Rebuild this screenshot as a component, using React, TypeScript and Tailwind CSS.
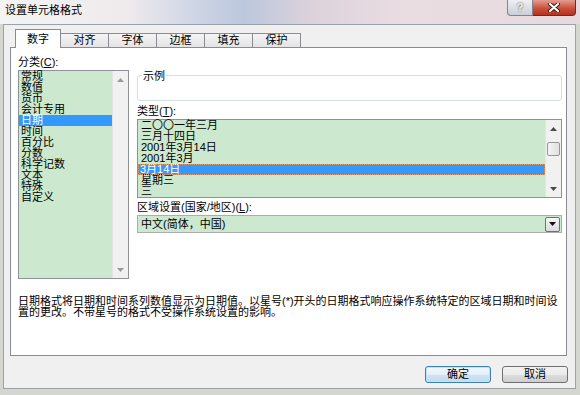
const categories = ["常规", "数值", "货币", "会计专用", "日期", "时间", "百分比", "分数", "科学记数", "文本", "特殊", "自定义"];
const types = ["二〇〇一年三月", "三月十四日", "2001年3月14日", "2001年3月", "3月14日", "星期三", "三"];
const tabs = ["对齐", "字体", "边框", "填充", "保护"];

function Arrow({ up, dark }: { up?: boolean; dark?: boolean }) {
  return (
    <svg width="7" height="4" viewBox="0 0 7 4">
      <path d={up ? "M0 4 L3.5 0 L7 4 Z" : "M0 0 L3.5 4 L7 0 Z"} fill={dark ? "#4a4a4a" : "#9a9a9a"} />
    </svg>
  );
}

function ScrollBar({ thumb, dark }: { thumb?: boolean; dark?: boolean }) {
  return (
    <div className="w-[16px] shrink-0 flex flex-col bg-[#f1f1f1] border-l border-[#e4e4e4]">
      <div className="h-[17px] flex items-center justify-center">
        <Arrow up dark={dark} />
      </div>
      <div className="flex-1">
        {thumb && (
          <div className="mt-[5px] mx-[1px] h-[14px] rounded-[2px] border border-[#979797] bg-[linear-gradient(90deg,#f3f3f3,#e2e2e2)]" />
        )}
      </div>
      <div className="h-[17px] flex items-center justify-center">
        <Arrow dark={dark} />
      </div>
    </div>
  );
}

export default function App() {
  return (
    <div className="w-[580px] h-[395px] overflow-hidden flex flex-col bg-[#d4d7d0] text-black font-['Liberation_Sans','Noto_Sans_CJK_SC',sans-serif]">
      {/* 标题栏 */}
      <div className="h-[24px] shrink-0 flex items-start bg-[linear-gradient(90deg,#f4f4f4_0%,#efeaec_22%,#d2d8e6_32%,#bcc7dd_42%,#dcd3db_54%,#eadde2_70%,#e6dadf_100%)]">
        <span className="ml-[5px] mt-[3px] text-[11px] leading-[15px]">设置单元格格式</span>
        <div className="ml-auto mr-[4px] flex">
          <div className="w-[26px] h-[16px] flex items-center justify-center rounded-bl-[4px] border border-t-0 border-[#7d8592] bg-[linear-gradient(180deg,#eef0f3,#c9ced8)] text-[11px] font-bold text-[#f6f6f6] [text-shadow:0_0_2px_#333]">
            ?
          </div>
          <div className="w-[43px] h-[16px] flex items-center justify-center rounded-br-[4px] border border-l-0 border-t-0 border-[#6e2a22] bg-[linear-gradient(180deg,#e59c8f,#c9513d_55%,#b7311e)]">
            <svg width="12" height="9" viewBox="0 0 12 9">
              <path d="M2 1 L10 8 M10 1 L2 8" stroke="#3a1a16" strokeWidth="4" strokeLinecap="round" />
              <path d="M2 1 L10 8 M10 1 L2 8" stroke="#ffffff" strokeWidth="2.2" strokeLinecap="round" />
            </svg>
          </div>
        </div>
      </div>

      {/* 对话框主体 */}
      <div className="ml-[3px] w-[573px] h-[365px] shrink-0 flex flex-col border border-[#9ca2a9] bg-[#f0f0f0]">
        {/* 选项卡 */}
        <div className="h-[23px] shrink-0 flex items-end pl-[11px] -mb-px relative z-10 text-[11px]">
          <div className="w-[46px] h-[19px] flex items-center justify-center bg-white border border-b-0 border-[#898c95]">
            数字
          </div>
          {tabs.map((t) => (
            <div
              key={t}
              className="w-[49px] h-[14px] mb-px -ml-px flex items-center justify-center border border-b-0 border-[#898c95] bg-[linear-gradient(180deg,#f4f4f4,#e4e4e4)]"
            >
              {t}
            </div>
          ))}
        </div>

        {/* 面板 */}
        <div className="ml-[6px] w-[557px] h-[309px] shrink-0 flex flex-col bg-white border border-[#898c95] pl-[7px] pt-[8px]">
          <div className="flex gap-[8px]">
            {/* 分类 */}
            <div className="w-[111px] flex flex-col">
              <div className="h-[14px] text-[11px] leading-[12px]">
                分类(<u>C</u>):
              </div>
              <div className="h-[209px] flex border border-[#8e9198]">
                <div className="flex-1 bg-[#cce8cf] text-[11px] leading-[11px]">
                  {categories.map((c, i) => (
                    <div key={c} className={i === 4 ? "h-[11px] pl-[2px] bg-[#3399ff] text-white" : "h-[11px] pl-[2px]"}>
                      {c}
                    </div>
                  ))}
                </div>
                <ScrollBar />
              </div>
            </div>

            {/* 右侧 */}
            <div className="w-[425px] flex flex-col">
              <div className="mt-[19px] h-[26px] relative rounded-[3px] border border-[#d5dfe5]">
                <span className="absolute -top-[6px] left-[4px] bg-white px-px text-[11px] leading-[12px]">示例</span>
              </div>
              <div className="h-[18px] flex items-end pb-[2px] text-[11px] leading-[12px]">
                类型(<u>T</u>):
              </div>
              <div className="h-[79px] flex border border-[#8e9198]">
                <div className="flex-1 bg-[#cce8cf] text-[11px] leading-[11px]">
                  {types.map((t, i) => (
                    <div
                      key={t}
                      className={
                        i === 4
                          ? "h-[11px] pl-[2px] bg-[#3399ff] text-white outline-1 outline-dotted -outline-offset-1 outline-[#d69a6a]"
                          : i === 6
                            ? "h-[10px] pl-[3px] leading-[10px]"
                            : "h-[11px] pl-[3px]"
                      }
                    >
                      {t}
                    </div>
                  ))}
                </div>
                <ScrollBar thumb dark />
              </div>
              <div className="h-[17px] flex items-center text-[11px] leading-[12px]">
                区域设置(国家/地区)(<u>L</u>):
              </div>
              <div className="h-[18px] flex items-center border border-[#abadb3] bg-[#cce8cf] pl-[3px] pr-[1px] text-[11px]">
                <span className="flex-1">中文(简体，中国)</span>
                <div className="w-[15px] h-[15px] flex items-center justify-center rounded-[2px] border border-[#707070] bg-[linear-gradient(180deg,#f6f6f6,#dcdcdc)]">
                  <svg width="7" height="4" viewBox="0 0 7 4">
                    <path d="M0 0 L3.5 4 L7 0 Z" fill="#111" />
                  </svg>
                </div>
              </div>
            </div>
          </div>

          {/* 说明 */}
          <div className="mt-[17px] text-[11px] leading-[11px] whitespace-nowrap">
            <div>日期格式将日期和时间系列数值显示为日期值。以星号(*)开头的日期格式响应操作系统特定的区域日期和时间设</div>
            <div>置的更改。不带星号的格式不受操作系统设置的影响。</div>
          </div>
        </div>

        {/* 按钮 */}
        <div className="mt-[10px] flex justify-end gap-[11px] pr-[7px] text-[11px]">
          <button className="w-[66px] h-[17px] flex items-center justify-center rounded-[3px] border border-[#3c7fb1] bg-[linear-gradient(180deg,#f2f8fc_0%,#e3eff8_50%,#cfe3f2_51%,#c3dbee_100%)] shadow-[inset_0_0_0_1px_#bfe4f8]">
            确定
          </button>
          <button className="w-[66px] h-[17px] flex items-center justify-center rounded-[3px] border border-[#707070] bg-[linear-gradient(180deg,#f2f2f2_0%,#ebebeb_50%,#dddddd_51%,#cfcfcf_100%)]">
            取消
          </button>
        </div>
      </div>
    </div>
  );
}
